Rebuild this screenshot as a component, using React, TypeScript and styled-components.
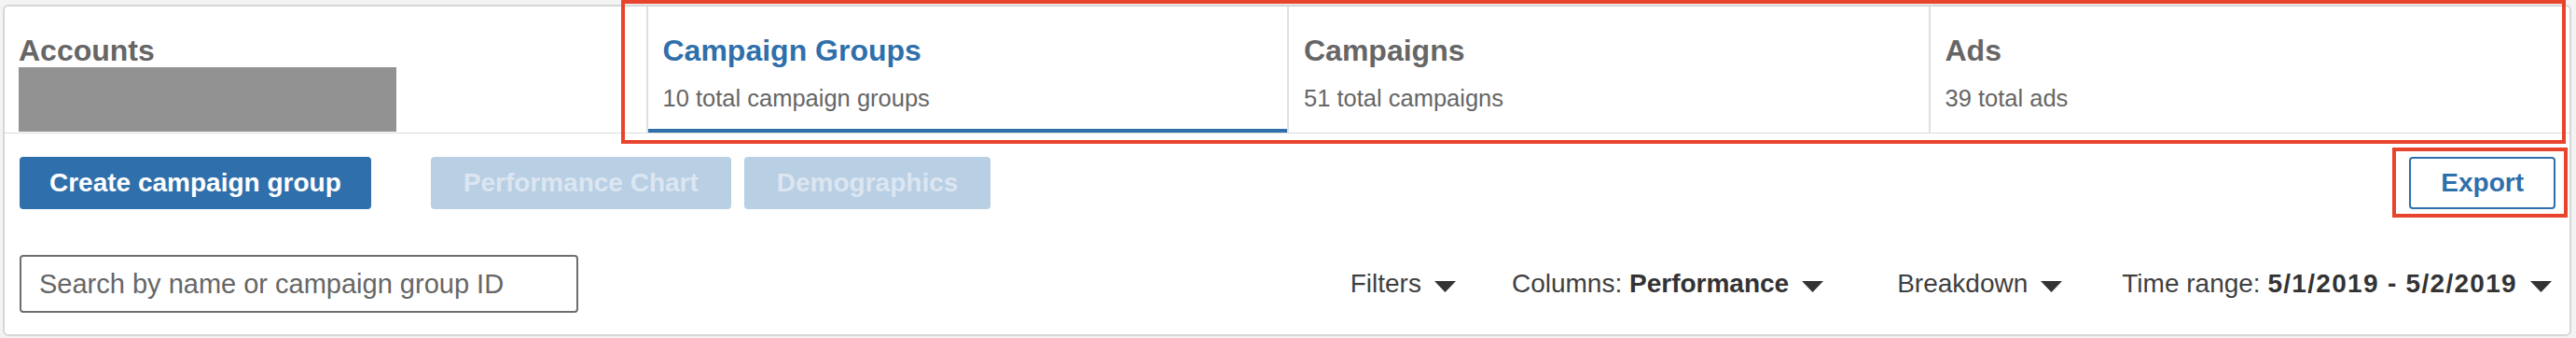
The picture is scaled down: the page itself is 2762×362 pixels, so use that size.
import React from "react";
import styled, { createGlobalStyle } from "styled-components";

const GlobalStyle = createGlobalStyle`
  html, body { margin: 0; padding: 0; background: #f3f3f3; }
  body { font-family: "Liberation Sans", Arial, sans-serif; }
  *, *::before, *::after { box-sizing: border-box; }
`;

const BLUE = "#2f6fab";

const Page = styled.div`
  position: relative;
  width: 2762px;
  height: 362px;
  padding: 5px 5px 0 3px;
`;

const Card = styled.section`
  width: 2754px;
  background: #fff;
  border: 2px solid #d6d6d6;
  border-radius: 6px;
  overflow: hidden;
  padding-bottom: 23px;
`;

const TabRow = styled.div`
  display: grid;
  grid-template-columns: repeat(4, 1fr);
  border-bottom: 1px solid #dcdcdc;
`;

const Cell = styled.div<{ $active?: boolean; $lead?: boolean }>`
  height: 135px;
  padding: 29px 16px 0 ${(p) => (p.$lead ? "15px" : "16px")};
  border-left: ${(p) => (p.$lead ? "none" : "2px solid #e0e0e0")};
  box-shadow: ${(p) => (p.$active ? `inset 0 -4px 0 ${BLUE}` : "none")};
  cursor: pointer;
`;

const Title = styled.div<{ $active?: boolean }>`
  font-size: 32px;
  line-height: 36px;
  font-weight: 700;
  color: ${(p) => (p.$active ? BLUE : "#666")};
  white-space: nowrap;
`;

const Sub = styled.div`
  margin-top: 19px;
  font-size: 25.5px;
  line-height: 28px;
  color: #666;
  white-space: nowrap;
`;

const Redacted = styled.div`
  width: 405px;
  height: 69px;
  background: #929292;
`;

const ActionRow = styled.div`
  display: flex;
  align-items: center;
  margin-top: 25px;
  padding: 0 15px 0 16px;
`;

const ButtonGroup = styled.div`
  display: flex;
  gap: 14px;
  margin-left: 64px;
`;

type Variant = "primary" | "disabled" | "outline";

const Button = styled.button<{ $variant: Variant }>`
  height: 56px;
  padding: 0 ${(p) => (p.$variant === "disabled" ? "35px" : "32px")};
  font-family: "Liberation Sans", Arial, sans-serif;
  font-size: 28px;
  font-weight: 700;
  border-radius: 4px;
  white-space: nowrap;
  cursor: ${(p) => (p.$variant === "disabled" ? "default" : "pointer")};
  background: ${(p) =>
    p.$variant === "primary" ? BLUE : p.$variant === "disabled" ? "#b9cfe4" : "#fff"};
  color: ${(p) =>
    p.$variant === "primary" ? "#fff" : p.$variant === "disabled" ? "#dce6f1" : BLUE};
  border: ${(p) => (p.$variant === "outline" ? `2px solid ${BLUE}` : "none")};
`;

const Spacer = styled.div`
  flex: 1;
`;

const FilterRow = styled.div`
  display: flex;
  align-items: center;
  margin-top: 49px;
  padding: 0 19px 0 16px;
`;

const Search = styled.input`
  width: 599px;
  height: 62px;
  border: 2px solid #6e6e6e;
  border-radius: 4px;
  padding: 0 19px;
  font-family: "Liberation Sans", Arial, sans-serif;
  font-size: 29px;
  color: #333;
  outline: none;
  &::placeholder { color: #666; }
`;

const Controls = styled.div`
  display: flex;
  align-items: center;
`;

const Dropdown = styled.button<{ $space: number }>`
  display: flex;
  align-items: center;
  gap: 14px;
  margin-left: ${(p) => p.$space}px;
  padding: 0;
  border: none;
  background: none;
  font-family: "Liberation Sans", Arial, sans-serif;
  font-size: 28px;
  line-height: 32px;
  color: #3f3f3f;
  white-space: nowrap;
  cursor: pointer;
`;

const Value = styled.strong<{ $wide?: boolean }>`
  font-weight: 700;
  color: #333;
  letter-spacing: ${(p) => (p.$wide ? "1.3px" : "0")};
`;

const Caret = styled.svg`
  display: block;
  margin-top: 6px;
  flex: none;
`;

const Highlight = styled.div`
  position: absolute;
  border: 4px solid #e8432c;
  pointer-events: none;
`;

const Arrow = () => (
  <Caret width="23" height="12" viewBox="0 0 23 12">
    <polygon points="0,0 23,0 11.5,12" fill="#333" />
  </Caret>
);

const tabs = [
  { title: "Campaign Groups", sub: "10 total campaign groups", active: true },
  { title: "Campaigns", sub: "51 total campaigns", active: false },
  { title: "Ads", sub: "39 total ads", active: false },
];

export default function App() {
  return (
    <>
      <GlobalStyle />
      <Page>
        <Card>
          <TabRow>
            <Cell $lead>
              <Title>Accounts</Title>
              <Redacted />
            </Cell>
            {tabs.map((t) => (
              <Cell key={t.title} $active={t.active}>
                <Title $active={t.active}>{t.title}</Title>
                <Sub>{t.sub}</Sub>
              </Cell>
            ))}
          </TabRow>
          <ActionRow>
            <Button $variant="primary">Create campaign group</Button>
            <ButtonGroup>
              <Button $variant="disabled" disabled>
                Performance Chart
              </Button>
              <Button $variant="disabled" disabled>
                Demographics
              </Button>
            </ButtonGroup>
            <Spacer />
            <Button $variant="outline">Export</Button>
          </ActionRow>
          <FilterRow>
            <Search placeholder="Search by name or campaign group ID" />
            <Spacer />
            <Controls>
              <Dropdown $space={0}>
                <span>Filters</span>
                <Arrow />
              </Dropdown>
              <Dropdown $space={60}>
                <span>
                  Columns: <Value>Performance</Value>
                </span>
                <Arrow />
              </Dropdown>
              <Dropdown $space={79}>
                <span>Breakdown</span>
                <Arrow />
              </Dropdown>
              <Dropdown $space={64}>
                <span>
                  Time range: <Value $wide>5/1/2019 - 5/2/2019</Value>
                </span>
                <Arrow />
              </Dropdown>
            </Controls>
          </FilterRow>
        </Card>
        <Highlight style={{ left: 666, top: 0, width: 2085, height: 154 }} />
        <Highlight style={{ left: 2565, top: 158, width: 188, height: 75 }} />
      </Page>
    </>
  );
}
